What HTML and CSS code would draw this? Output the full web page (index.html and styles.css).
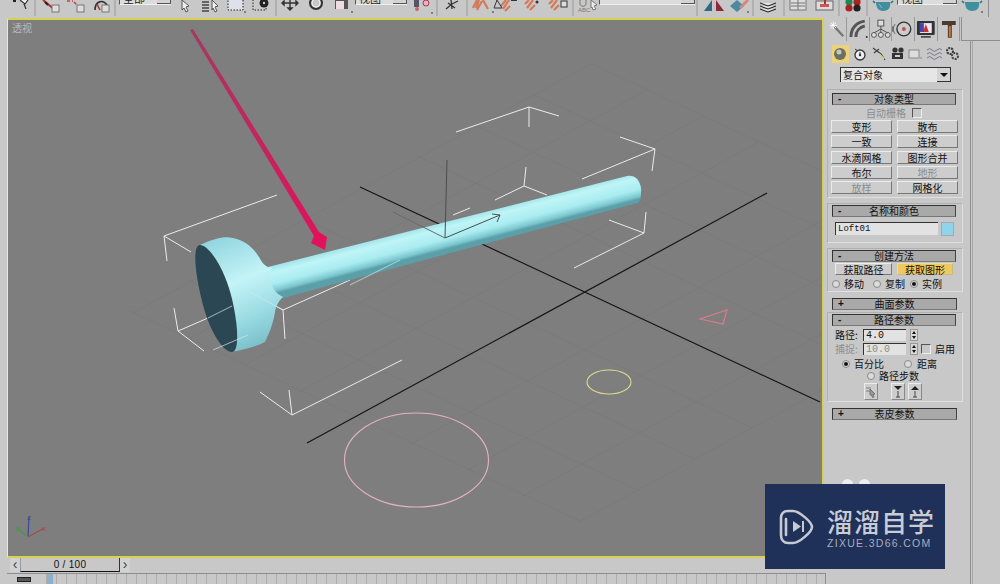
FILE: index.html
```html
<!DOCTYPE html>
<html lang="zh">
<head>
<meta charset="utf-8">
<title>3ds Max</title>
<link rel="stylesheet" href="styles.css">
</head>
<body>
<div class="app">
  <div class="toolbar">
    <svg class="tb" width="119" height="17" viewBox="0 0 119 17">
      <path d="M13 0h3v2h-3z" fill="#222"/><path d="M20 0l5 4 3-4M24 4l2 5" stroke="#333" fill="#eee" stroke-width="1.2"/>
      <path d="M35 0v16M115 0v16" stroke="#999"/>
      <path d="M43 0l12 10" stroke="#a33" stroke-width="2"/><path d="M45 2l3 3" stroke="#222" stroke-width="2"/><rect x="52" y="5" width="7" height="7" fill="#ddd" stroke="#777"/>
      <path d="M67 1h6M74 2l4 4" stroke="#b44" stroke-width="1.6" stroke-dasharray="3 2"/><rect x="77" y="5" width="7" height="7" fill="#ddd" stroke="#777"/>
      <path d="M95 10c0-9 8-11 12-5" stroke="#333" stroke-width="1.6" fill="none"/><path d="M97 4l3 6" stroke="#a33" stroke-width="1.6"/><rect x="102" y="5" width="7" height="7" fill="#ddd" stroke="#777"/>
    </svg>
    <div class="combo combo-s"><span class="combo-t">全部</span><span class="combo-b"></span></div>
    <svg class="tb" width="184" height="17" viewBox="172 0 184 17">
      <path d="M183 0l7 6-3 1 2 4-2 1-2-4-2 2z" fill="#eee" stroke="#555"/>
      <path d="M203 2h7M203 5h7M203 8h7M203 11h7" stroke="#444" stroke-width="1.5"/><path d="M213 0l6 6-3 1 2 4-2 1-2-4-1 2z" fill="#eee" stroke="#555"/>
      <rect x="229" y="-3" width="15" height="13" fill="#dfe0ea" stroke="#222" stroke-dasharray="1.5 1.5"/><circle cx="246" cy="12" r=".8" fill="#222"/>
      <rect x="254" y="-3" width="13" height="13" fill="none" stroke="#222" stroke-dasharray="1.5 1.5"/><circle cx="265" cy="3" r="4.5" fill="#222"/><circle cx="265" cy="3" r="1.2" fill="#ccc"/>
      <path d="M277 0v16" stroke="#999"/>
      <path d="M291 0v9M284 3h14M291 10l-2-2h4zM283 3l2-2v4zM299 3l-2-2v4z" stroke="#333" stroke-width="1.4" fill="#333"/>
      <circle cx="317" cy="3" r="6" fill="none" stroke="#333" stroke-width="2"/><circle cx="317" cy="3" r="4" fill="none" stroke="#eee"/>
      <rect x="336" y="-2" width="13" height="11" fill="#555"/><rect x="337" y="1" width="8" height="8" fill="#eedde0"/><circle cx="353" cy="12" r=".8" fill="#222"/>
    </svg>
    <div class="combo combo-s"><span class="combo-t">视图</span><span class="combo-b"></span></div>
    <svg class="tb" width="192" height="17" viewBox="408 0 192 17">
      <rect x="415" y="-1" width="5" height="8" fill="#556"/><circle cx="418" cy="9" r="2" fill="#c66"/><circle cx="427" cy="3" r="3" fill="#eac" stroke="#944"/><circle cx="433" cy="13" r=".8" fill="#222"/>
      <path d="M438 0v16" stroke="#999"/>
      <path d="M447 9l6-5 6-3M452 0l1 9M449 3l7 5" stroke="#333" stroke-width="1.3" fill="none"/>
      <path d="M468 0v16" stroke="#999"/>
      <path d="M474 8l4-8M480 0l-3 8M478 10l5-9M484 0l5 9" stroke="#d27a5a" stroke-width="2.2" fill="none"/><circle cx="494" cy="12" r=".8" fill="#222"/>
      <path d="M502 6l5-6M504 9l6-9M506 11l5-5" stroke="#d27a5a" stroke-width="2.2" fill="none"/><path d="M512 0h6" stroke="#333" stroke-width="2"/><path d="M498 0l5 8h-8z" fill="none" stroke="#333"/>
      <path d="M526 4l4-4M528 8l6-8M531 10l5-5" stroke="#d27a5a" stroke-width="2.2" fill="none"/><circle cx="538" cy="2" r="1.5" fill="#333"/>
      <path d="M550 4l4-4M552 8l6-8M555 10l5-5" stroke="#d27a5a" stroke-width="2.2" fill="none"/><rect x="562" y="1" width="6" height="6" fill="#ddd" stroke="#333"/>
      <path d="M574 0v16" stroke="#999"/>
      <path d="M581 0v4c0 3 6 3 6 0v-4" stroke="#777" fill="none"/><path d="M592 0l6 5-3 1 2 3-3 1-1-3-1 1z" fill="#eee" stroke="#777"/>
      <text class="abc" x="579" y="12">ABC</text>
    </svg>
    <div class="combo combo-l"><span class="combo-b"></span></div>
    <svg class="tb" width="202" height="17" viewBox="696 0 202 17">
      <path d="M698 0v16M754 0v16M785 0v16M840 0v16M868 0v16" stroke="#999"/>
      <path d="M705 11l8-11v11z" fill="#2a6a86"/><path d="M725 11l-8-11v11z" fill="#8a2a40"/><path d="M715 0v12" stroke="#e8b0b0"/>
      <path d="M731 6l7-6 7 6-7 6z" fill="#4b8aa0"/><path d="M741 8l8-8" stroke="#d28a80" stroke-width="3"/><circle cx="749" cy="12" r=".8" fill="#222"/>
      <path d="M761 3l8 3 8-3M761 6l8 3 8-3M761 9l8 3 8-3" stroke="#222" fill="#e4e4e4" stroke-width="1.1"/>
      <rect x="791" y="-1" width="16" height="11" fill="#ddd" stroke="#777"/><path d="M792 3h14M792 6h14M799 0v10" stroke="#777"/>
      <rect x="817" y="1" width="17" height="9" fill="#ddd" stroke="#666"/><path d="M826 0v4" stroke="#a33" stroke-width="2"/><rect x="821" y="4" width="9" height="3" fill="#c55"/>
      <circle cx="850" cy="2" r="3.6" fill="#1b8a56"/><circle cx="858" cy="2" r="3.6" fill="#a22"/><circle cx="850" cy="8" r="3.6" fill="#a22"/><circle cx="858" cy="8" r="3.6" fill="#222"/>
      <path d="M877 2h14c1 6-2 9-7 9s-7-4-7-9z" fill="#3f8f9f"/><path d="M876 3l-2-2M892 3l2-2" stroke="#2b6f80" stroke-width="1.6"/><path d="M880 4l3 4" stroke="#9ad"/>
    </svg>
    <div class="combo combo-m"><span class="combo-t">视图</span><span class="combo-b"></span></div>
    <svg class="tb" width="30" height="17" viewBox="958 0 30 17">
      <path d="M966 2h14c1 6-2 9-7 9s-7-4-7-9z" fill="#3f8f9f"/><path d="M965 3l-2-2M981 3l2-2" stroke="#2b6f80" stroke-width="1.6"/>
      <circle cx="983" cy="12" r=".8" fill="#222"/>
    </svg>
  </div>

  <div class="workspace">
    <div class="left">
      <div class="viewport">
        <svg class="scene" width="814" height="536" viewBox="8 20 814 536">
          <defs>
            <linearGradient id="tube" gradientUnits="userSpaceOnUse" x1="440" y1="222" x2="447" y2="249">
              <stop offset="0" stop-color="#9de2e8"/><stop offset=".25" stop-color="#bff5f7"/><stop offset=".65" stop-color="#a9ecf0"/><stop offset=".9" stop-color="#7cc6cf"/><stop offset="1" stop-color="#5b9fa9"/>
            </linearGradient>
            <linearGradient id="cap" gradientUnits="userSpaceOnUse" x1="215" y1="240" x2="262" y2="348">
              <stop offset="0" stop-color="#93d6df"/><stop offset=".4" stop-color="#c4f4f7"/><stop offset=".75" stop-color="#96d8e0"/><stop offset="1" stop-color="#78bcc6"/>
            </linearGradient>
            <linearGradient id="arr" gradientUnits="userSpaceOnUse" x1="192" y1="30" x2="325" y2="249">
              <stop offset="0" stop-color="#a33a60"/><stop offset="1" stop-color="#e3105c"/>
            </linearGradient>
          </defs>
          <path class="grid" d="M130 311L580 521M187.500 280L637.500 490M245 249L695 459M302.500 218L752.500 428M417.500 156L867.500 366M475 125L925 335M532.500 94L982.500 304M590 63L1040 273M131 314L591 64M187 340L647 90M243 366L703 116M299 392L759 142M411 444L871 194M467 470L927 220M523 496L983 246M579 522L1039 272"/>
          <path class="axis" d="M360 187L820 402M307 443L767 193"/>
          <ellipse class="pink" cx="416.500" cy="460" rx="72" ry="47"/>
          <ellipse class="yellow" cx="609" cy="382" rx="22" ry="12"/>
          <path class="tri" d="M700 319L727 310L723 324Z"/>
          <path class="box" d="M277 195L164 236L191 252M164 236L167 261M174 308L178 331L204 351M178 331L208 318M285 339L283 310L350 280M283 310L250 292M260 392L292 415L289 390M292 415L402 360M456 132L529 107L559 116M529 107V127M620 137L655 149L582 179M655 149L652 171M526 167L524 186L547 195M524 186L495 200M470 208L453 215M646 212L644 233L609 220M644 233L574 268"/>
          <path d="M268 267L627 176C640 173 642 190 641 192C641 198 640 203 637 203L290 296C282 300 272 298 268 290Z" fill="url(#tube)"/>
          <path d="M200 245C215 238 225 236 233 238C248 241 256 251 262 262C265 266 268 268 272 267C268 280 272 292 283 297C278 302 276 306 275 312C273 325 268 336 265 342C255 347 243 350 232 352Z" fill="url(#cap)"/>
          <path d="M200 245C192 245 195 275 203 305C211 335 224 352 232 352C240 352 238 322 231 295C223 265 208 245 200 245Z" fill="#2b4753"/>
          <path class="box thin" d="M400 260L350 285M250 292L283 310M208 318L232 306M213 350L248 335"/>
          <path class="gizmo" d="M445 238L447 160M445 238L500 215M492 214L500 215L497 222"/>
          <path class="gizmo-f" d="M445 238L393 212"/>
          <path d="M190 30L193 29L319 232L327 237L325 250L311 243L314 236Z" fill="url(#arr)"/>
          <path d="M28 537L29 517" stroke="#3a4a9a" stroke-width="1.200"/>
          <path d="M28 537L44 528" stroke="#a84a4a" stroke-width="1.200"/>
          <path d="M28 537L17 528" stroke="#3f9a4a" stroke-width="1.200"/>
          <text class="tag z" x="27" y="520">z</text>
          <text class="tag x" x="42" y="531">x</text>
          <text class="tag y" x="15" y="530">y</text>
          <text class="vp-name" x="12" y="32">透视</text>
        </svg>
      </div>
      <div class="timeline">
        <span class="t-btn">‹</span>
        <span class="t-track">0 / 100</span>
        <span class="t-btn">›</span>
      </div>
      <div class="ruler">
        <span class="key"></span>
        <div class="ticks"><span class="thumb"></span></div>
      </div>
    </div>

    <div class="panel">
      <div class="tabs">
        <span class="tab tab-on"><svg width="22" height="22" viewBox="0 0 22 22"><path d="M8 7l11 12" stroke="#777" stroke-width="2.500"/><path d="M8 3v8M4 7h8M5 4l6 6M11 4l-6 6" stroke="#fff"/></svg></span>
        <span class="tab"><svg width="22" height="22" viewBox="0 0 22 22"><path d="M4 19C4 10 10 4 18 3M9 19C9 13 13 9 18 8" stroke="#555" stroke-width="3" fill="none"/><circle cx="20" cy="19" r="1" fill="#222"/></svg></span>
        <span class="tab"><svg width="22" height="22" viewBox="0 0 22 22"><rect x="8" y="2" width="6" height="6" fill="#ddd" stroke="#555"/><circle cx="4" cy="17" r="2.500" fill="#ddd" stroke="#555"/><circle cx="11" cy="17" r="2.500" fill="#ddd" stroke="#555"/><circle cx="18" cy="17" r="2.500" fill="#ddd" stroke="#555"/><path d="M11 8v7M11 11L4 15M11 11l7 4" stroke="#555" fill="none"/></svg></span>
        <span class="tab"><svg width="22" height="22" viewBox="0 0 22 22"><circle cx="12" cy="11" r="7" fill="#ccc" stroke="#333" stroke-width="1.400"/><circle cx="12" cy="11" r="2" fill="#b55"/><path d="M3 6a9 9 0 0 0 0 10M1 8a7 7 0 0 0 0 6" stroke="#666" fill="none"/></svg></span>
        <span class="tab"><svg width="22" height="22" viewBox="0 0 22 22"><rect x="2" y="3" width="18" height="14" rx="1" fill="#333"/><rect x="5" y="5" width="12" height="10" fill="#e8eaf6"/><path d="M8 14l3-8 3 8z" fill="#c33"/><path d="M5 5h4v9H5z" fill="#44a"/><path d="M6 19h10" stroke="#333" stroke-width="1.500"/></svg></span>
        <span class="tab"><svg width="22" height="22" viewBox="0 0 22 22"><path d="M4 3h14v4H14v13H10V7H4z" fill="#4a3a30"/><path d="M11 8h2v11h-2z" fill="#c67a3a"/></svg></span>
      </div>
      <div class="subtabs">
        <span class="sub sub-on"><svg width="16" height="16" viewBox="0 0 16 16"><circle cx="8" cy="8" r="6" fill="#6d6f62"/><circle cx="7" cy="6" r="2.500" fill="#c5c9b8"/></svg></span>
        <span class="sub sp1"><svg width="16" height="16" viewBox="0 0 16 16"><circle cx="8" cy="9" r="5" fill="#eee" stroke="#333" stroke-width="1.300"/><path d="M8 9V6M3 3l3 2" stroke="#333"/><circle cx="8" cy="9" r="1.200" fill="#333"/></svg></span>
        <span class="sub sp2"><svg width="16" height="16" viewBox="0 0 16 16"><path d="M2 2l8 6 4 6M3 7l5-4" stroke="#444" stroke-width="1.300" fill="none"/><path d="M8 8l5 5" stroke="#cc9" stroke-width="2"/></svg></span>
        <span class="sub sp3"><svg width="16" height="16" viewBox="0 0 16 16"><circle cx="5" cy="4" r="2.600" fill="#333"/><circle cx="11" cy="4" r="2.600" fill="#333"/><rect x="2" y="7" width="11" height="6" fill="#333"/><rect x="5" y="9" width="5" height="2" fill="#ccc"/></svg></span>
        <span class="sub sp4"><svg width="16" height="16" viewBox="0 0 16 16"><rect x="2" y="4" width="10" height="8" fill="#ddd" stroke="#888"/><path d="M13 12h2" stroke="#888"/></svg></span>
        <span class="sub sp5"><svg width="18" height="16" viewBox="0 0 18 16"><path d="M1 4q3-3 5 0t5 0 5 0M1 8q3-3 5 0t5 0 5 0M1 12q3-3 5 0t5 0 5 0" stroke="#778" fill="none"/></svg></span>
        <span class="sub sp6"><svg width="16" height="16" viewBox="0 0 16 16"><circle cx="6" cy="5" r="3" fill="none" stroke="#333" stroke-width="2" stroke-dasharray="2 1"/><circle cx="11" cy="10" r="3" fill="none" stroke="#444" stroke-width="2" stroke-dasharray="2 1"/></svg></span>
      </div>
      <div class="select"><span class="select-t">复合对象</span><span class="select-b"></span></div>

      <section class="roll roll-1">
        <h2 class="head"><i>-</i>对象类型</h2>
        <div class="auto"><span class="dis">自动栅格</span><span class="check"></span></div>
        <div class="btns">
          <button class="btn">变形</button><button class="btn">散布</button>
          <button class="btn">一致</button><button class="btn">连接</button>
          <button class="btn">水滴网格</button><button class="btn">图形合并</button>
          <button class="btn">布尔</button><button class="btn dis">地形</button>
          <button class="btn dis">放样</button><button class="btn">网格化</button>
        </div>
      </section>

      <section class="roll roll-2">
        <h2 class="head"><i>-</i>名称和颜色</h2>
        <div class="name-row"><span class="name">Loft01</span><span class="swatch"></span></div>
      </section>

      <section class="roll roll-3">
        <h2 class="head"><i>-</i>创建方法</h2>
        <div class="get-row"><button class="get">获取路径</button><button class="get get-on">获取图形</button></div>
        <div class="radio-row"><span class="radio"></span><span>移动</span><span class="radio r2"></span><span>复制</span><span class="radio on r4"></span><span>实例</span></div>
      </section>

      <h2 class="head solo"><i>+</i>曲面参数</h2>

      <section class="roll roll-5">
        <h2 class="head"><i>-</i>路径参数</h2>
        <div class="field"><span class="lab">路径:</span><span class="num">4.0</span><span class="spin"></span></div>
        <div class="field f2"><span class="lab dis">捕捉:</span><span class="num dis">10.0</span><span class="spin"></span><span class="check c2"></span><span>启用</span></div>
        <div class="opt"><span class="radio on"></span><span>百分比</span><span class="radio r3"></span><span>距离</span></div>
        <div class="opt opt2"><span class="radio"></span><span>路径步数</span></div>
        <div class="path-btns">
          <span class="pb"><svg width="12" height="12" viewBox="0 0 12 12"><path d="M1 2h5M1 5h4M5 3l5 5-2 .5 1 2.500-1.500.5-1-2.500L5 9z" fill="#999" stroke="#666" stroke-width=".8"/></svg></span>
          <span class="pb pb2"><svg width="12" height="14" viewBox="0 0 12 14"><path d="M2 1h8L6 5z" fill="#222"/><path d="M6 6v6M4 12h4" stroke="#444"/></svg></span>
          <span class="pb pb3"><svg width="12" height="14" viewBox="0 0 12 14"><path d="M6 1l4 4H2z" fill="#222"/><path d="M6 6v6M4 12h4" stroke="#444"/></svg></span>
        </div>
      </section>

      <h2 class="head solo solo2"><i>+</i>表皮参数</h2>
      <div class="bubbles"><span></span><span></span></div>
    </div>
    <div class="gutter"></div>
  </div>

  <aside class="mark">
    <svg class="mark-logo" width="36" height="38" viewBox="0 0 36 38">
      <path d="M9 3C4 3 2 6 2 10V27C2 32 5 35 9 35H14C20 35 33 24 33 19C33 14 20 3 14 3Z" fill="none" stroke="#c5c9d2" stroke-width="2.600"/>
      <path d="M7 11V27" stroke="#c5c9d2" stroke-width="2.600" stroke-linecap="round"/>
      <path d="M14 13L22 18.500L14 24Z" fill="#c5c9d2"/><path d="M24 13V24" stroke="#c5c9d2" stroke-width="2"/>
    </svg>
    <div class="mark-text">
      <strong class="mark-cn">溜溜自学</strong>
      <span class="mark-en">ZIXUE.3D66.COM</span>
    </div>
  </aside>
</div>
</body>
</html>
```

FILE: styles.css
```css
* { box-sizing: border-box; }
html, body { margin: 0; padding: 0; }
body { width: 1000px; height: 584px; overflow: hidden; background: #c9c8c9; font: 10px/1 "Noto Sans CJK SC", "Liberation Sans", sans-serif; color: #111; }
svg { display: block; }
.app { position: relative; width: 1000px; height: 584px; overflow: hidden; display: flex; flex-direction: column; }

.toolbar { height: 17px; width: 989px; display: flex; align-items: flex-start; border-right: 1px solid #8c8c8c; flex: none; }
.tb { flex: none; }
.abc { font: 6px "Liberation Sans", sans-serif; fill: #777; }
.combo { flex: none; height: 15px; margin-top: -10px; background: #dcdcdc; border-left: 1px solid #555; border-bottom: 1px solid #f0f0f0; position: relative; }
.combo-s { width: 52px; }
.combo-l { width: 96px; }
.combo-m { width: 60px; }
.combo-t { position: absolute; left: 3px; bottom: 0; font-size: 11px; color: #222; }
.combo-b { position: absolute; right: 0; bottom: 0; width: 14px; height: 6px; background: #d4d4d4; border-right: 1px solid #555; border-bottom: 1px solid #555; }

.workspace { flex: 1; min-height: 0; display: flex; }
.left { width: 826px; flex: none; padding-left: 7px; display: flex; flex-direction: column; }
.viewport { height: 540px; width: 817px; flex: none; border-top: 2px solid #d9d04e; border-bottom: 2px solid #d9d04e; border-right: 2px solid #d9d04e; border-left: 1px solid #e6e6e6; background: #7f7e7f; margin-top: 1px; overflow: hidden; }
.scene { background: #7f7e7f; }
.grid { stroke: #7a797a; stroke-width: .7; fill: none; }
.axis { stroke: #151515; stroke-width: 1.200; fill: none; }
.pink { fill: none; stroke: #e6b2c4; stroke-width: 1.100; }
.yellow { fill: none; stroke: #dcdc8e; stroke-width: 1.100; }
.tri { fill: none; stroke: #dc7a8a; stroke-width: 1.200; }
.box { fill: none; stroke: #ececec; stroke-width: 1; }
.thin { stroke: #cfe9ec; stroke-width: .7; }
.gizmo { fill: none; stroke: #4d4d4d; stroke-width: 1; }
.gizmo-f { fill: none; stroke: #6a6a6a; stroke-width: 1; }
.tag { font: 8px "Liberation Sans", sans-serif; }
.z { fill: #3a4a9a; }
.x { fill: #a84a4a; }
.y { fill: #3f9a4a; }
.vp-name { font-size: 10px; fill: #b9b9b9; }

.timeline { height: 14px; flex: none; display: flex; align-items: stretch; margin-left: 3px; width: 120px; font-family: "Liberation Sans", sans-serif; }
.t-btn { width: 10px; text-align: center; font-size: 14px; line-height: 12px; color: #444; background: #d2d2d2; flex: none; }
.t-track { flex: 1; text-align: center; line-height: 13px; border-bottom: 1px solid #111; border-left: 1px solid #999; border-right: 1px solid #333; letter-spacing: .3px; }
.ruler { flex: 1; min-height: 0; display: flex; align-items: center; border-top: 1px solid #8e8e8e; border-right: 1px solid #8e8e8e; margin-top: 1px; width: 819px; }
.key { width: 14px; height: 5px; margin-left: 10px; background: #555; border: 1px solid #222; flex: none; }
.ticks { margin-left: 15px; flex: 1; align-self: stretch; background: repeating-linear-gradient(90deg, #adadad 0 1px, #c9c8c9 1px 10px); position: relative; }
.thumb { position: absolute; left: 1px; top: 0; bottom: 0; width: 6px; background: #8fb0cc; }

.panel { width: 144px; flex: none; position: relative; display: flex; flex-direction: column; }
.tabs { display: flex; height: 24px; width: 136px; border-right: 1px solid #8e8e8e; flex: none; }
.tab { width: 22.700px; height: 24px; border-right: 1px solid #9a9a9a; display: flex; align-items: center; justify-content: center; flex: none; }
.tab-on { width: 21px; }
.subtabs { display: flex; align-items: center; height: 19px; margin-top: 3px; padding-left: 6px; flex: none; }
.sub { display: block; width: 16px; flex: none; }
.sub-on { width: 17px; height: 18px; background: #ecd27a; padding-top: 1px; }
.sp1 { margin-left: 3px; }
.sp2 { margin-left: 3px; }
.sp3 { margin-left: 3px; }
.sp4 { margin-left: 1px; }
.sp5 { margin-left: 3px; }
.sp6 { margin-left: 2px; }
.select { width: 111px; height: 15px; margin: 4px 0 0 14px; background: #e6e6e6; border-top: 1px solid #333; border-left: 1px solid #333; position: relative; flex: none; }
.select-t { position: absolute; left: 2px; top: 2px; font-size: 10px; }
.select-b { position: absolute; right: 0; top: 0; bottom: 0; width: 14px; background: #d4d4d4; border-right: 1px solid #333; border-bottom: 1px solid #333; }
.select-b::after { content: ""; position: absolute; left: 3px; top: 5px; border: 4px solid transparent; border-top: 4px solid #111; border-bottom: 0; }

.roll { width: 136px; margin-left: 1px; padding: 0 6px 0 4px; border: 1px solid #b0b0b0; border-right-color: #e0e0e0; border-bottom-color: #e0e0e0; flex: none; }
.head { margin: 0; height: 12px; background: #a9a9a9; border-top: 1px solid #333; border-left: 1px solid #333; border-right: 1px solid #444; border-bottom: 1px solid #777; font-size: 10px; line-height: 10px; font-weight: 400; text-align: center; position: relative; color: #111; }
.head i { position: absolute; left: 5px; top: 0; font-style: normal; font-family: "Liberation Sans", sans-serif; font-weight: 700; }
.dis { color: #8d8d8d !important; }
.roll-1 { margin-top: 7px; height: 109px; padding-top: 3px; }
.auto { height: 15px; display: flex; align-items: center; margin-left: 34px; gap: 6px; }
.check { width: 10px; height: 10px; flex: none; background: #c9c8c9; border-top: 1px solid #555; border-left: 1px solid #555; border-right: 1px solid #eee; border-bottom: 1px solid #eee; }
.btns { display: grid; grid-template-columns: 61px 61px; column-gap: 5px; row-gap: 2.300px; grid-auto-rows: 13px; margin-left: -1px; }
.btn, .get { padding: 0; font: inherit; line-height: 11px; color: #111; background: #cdcdcd; border: 1px solid; border-color: #ececec #777 #777 #ececec; }

.roll-2 { margin-top: 5px; height: 40px; padding-top: 1px; }
.name-row { display: flex; gap: 3px; margin-top: 5px; margin-left: 3px; }
.name { width: 103px; height: 13px; background: #e2e2e2; border-top: 1px solid #333; border-left: 1px solid #333; font: 9px/12px "Liberation Mono", monospace; padding-left: 2px; }
.swatch { width: 13px; height: 14px; background: #8fd4ea; border: 1px solid #a8a8a8; }

.roll-3 { margin-top: 5px; height: 44px; padding-top: 1px; }
.get-row { display: flex; gap: 5px; margin: 1px 0 0 3px; }
.get { width: 57px; height: 12px; }
.get-on { background: #f0c95e; border-color: #e6dca8 #c8ba88 #c8ba88 #e6dca8; width: 56px; }
.radio-row { display: flex; align-items: center; height: 14px; margin-top: 2px; }
.radio { width: 8px; height: 8px; border-radius: 50%; background: #dcdcdc; border: 1px solid #888; flex: none; margin-right: 4px; position: relative; }
.on::after { content: ""; position: absolute; left: 1px; top: 1px; width: 4px; height: 4px; border-radius: 50%; background: #111; }
.r2 { margin-left: 9px; }
.r4 { margin-left: 5px; }
.solo { width: 125px; margin: 6px 0 0 6px; flex: none; }
.roll-5 { margin-top: 2px; height: 90px; padding-top: 1px; }
.field { display: flex; align-items: center; height: 12px; margin-top: 3px; margin-left: 3px; }
.f2 { margin-top: 2px; }
.lab { width: 28px; flex: none; }
.num { width: 43px; height: 12px; flex: none; background: #e2e2e2; border-top: 1px solid #333; border-left: 1px solid #333; font: 10px/11px "Liberation Mono", monospace; padding-left: 2px; }
.spin { width: 8px; height: 12px; margin-left: 4px; flex: none; background: #d8d8d8; border: 1px solid #999; position: relative; }
.spin::before { content: ""; position: absolute; left: 1px; top: 1px; border: 2px solid transparent; border-bottom: 3px solid #111; border-top: 0; }
.spin::after { content: ""; position: absolute; left: 1px; bottom: 1px; border: 2px solid transparent; border-top: 3px solid #111; border-bottom: 0; }
.c2 { margin: 0 4px 0 3px; }
.opt { display: flex; align-items: center; height: 12px; margin-top: 3px; padding-left: 10px; }
.opt2 { margin-top: 0; padding-left: 35px; }
.r3 { margin-left: 20px; margin-right: 5px; }
.path-btns { display: flex; margin: 1px 0 0 32px; }
.pb { width: 14px; height: 17px; display: flex; align-items: center; justify-content: center; background: #cdcdcd; border: 1px solid; border-color: #ececec #888 #888 #ececec; }
.pb2 { margin-left: 13px; }
.pb3 { margin-left: 3px; }
.bubbles { position: absolute; left: 16px; top: 462px; display: flex; gap: 6px; }
.bubbles span { width: 11px; height: 11px; border-radius: 50%; background: #eeeef0; }

.gutter { flex: 1; margin: 23px 0 0 -9px; border-top: 1px solid #8e8e8e; background: linear-gradient(90deg, transparent 9px, #8e8e8e 9px 10px, transparent 10px 11px, #a8a8a8 11px 12px, transparent 12px); }

.mark { position: absolute; left: 765px; top: 484px; width: 180px; height: 85px; background: #1f3059; display: flex; align-items: center; padding: 0 0 0 14px; }
.mark-logo { flex: none; }
.mark-text { display: flex; flex-direction: column; margin-left: 12px; margin-top: 1px; }
.mark-cn { font-size: 26px; line-height: 30px; letter-spacing: 1px; color: #c9ccd4; font-weight: 500; white-space: nowrap; }
.mark-en { font: 10.500px/12px "Liberation Sans", sans-serif; letter-spacing: 1.300px; color: #a9aebb; margin-top: 1px; white-space: nowrap; }
```
